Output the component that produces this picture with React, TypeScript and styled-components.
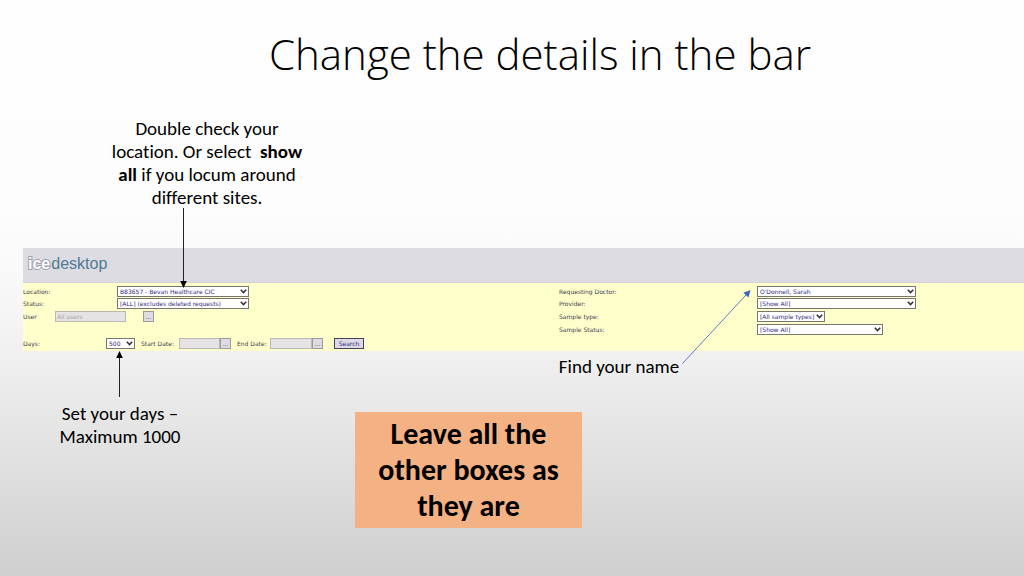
import React from "react";
import styled, { createGlobalStyle } from "styled-components";

const GlobalStyle = createGlobalStyle`
  * { box-sizing: border-box; }
  body { margin: 0; }
`;

const Slide = styled.main`
  min-height: 100vh;
  padding-bottom: 48px;
  background: linear-gradient(180deg, #fefefe 0%, #fdfdfd 36%, #f8f8f8 50%, #f0f0f0 62%, #cfcfcf 100%);
  font-family: Carlito, Lato, "Open Sans", sans-serif;
  font-variant-ligatures: none;
  color: #000;
  overflow: hidden;
`;

const Title = styled.h1`
  margin: 0;
  padding: 28px 0 0 56px;
  font-family: "Open Sans", Lato, sans-serif;
  font-size: 42px;
  line-height: 52px;
  font-weight: 300;
  text-align: center;
`;

const Note = styled.p<{ $width: number }>`
  position: relative;
  width: ${(p) => p.$width}px;
  margin: 0;
  font-size: 19px;
  line-height: 23px;
  text-align: center;
  white-space: nowrap;
`;

const TopNotes = styled.div`
  padding: 37px 0 39px 107px;
`;

const Arrow = styled.svg<{ $left: number; $top: number }>`
  position: absolute;
  left: ${(p) => p.$left}px;
  top: ${(p) => p.$top}px;
  z-index: 1;
  overflow: visible;
  pointer-events: none;
`;

const Panel = styled.section`
  margin-left: 23px;
  font-family: "DejaVu Sans", Verdana, sans-serif;
  font-size: 6px;
  line-height: 11px;
  color: #3c3c50;
`;

const Banner = styled.header`
  height: 35px;
  padding: 5px;
  background: #dddce3;
  border-bottom: 1px solid #d3d2d8;
`;

const Logo = styled.div`
  font-family: "Liberation Sans", Arial, sans-serif;
  font-size: 16px;
  line-height: 22px;
  color: #4f7a90;
`;

const LogoMark = styled.span`
  margin-right: 1px;
  font-weight: 700;
  color: #fff;
  -webkit-text-stroke: 2px #a0a2ae;
  paint-order: stroke fill;
`;

const Form = styled.form`
  display: grid;
  grid-template-columns: 536fr 465fr;
  padding: 3px 0 2px;
  background: #ffffcc;
`;

const Column = styled.div`
  display: flex;
  flex-direction: column;
  gap: 1px;
`;

const Row = styled.div<{ $before?: number }>`
  display: flex;
  align-items: center;
  height: 11px;
  margin-top: ${(p) => p.$before ?? 0}px;
`;

const Label = styled.label<{ $width: number }>`
  flex: none;
  width: ${(p) => p.$width}px;
  white-space: nowrap;
`;

const SelectBox = styled.span<{ $width: number }>`
  position: relative;
  flex: none;
  display: flex;
  width: ${(p) => p.$width}px;
  height: 11px;
`;

const Select = styled.select`
  appearance: none;
  width: 100%;
  height: 11px;
  padding: 0 0 0 2px;
  border: 1px solid #77776f;
  border-radius: 0;
  background: #fff;
  font: inherit;
  line-height: 9px;
  color: #2f2a80;
`;

const Chevron = styled.svg`
  position: absolute;
  right: 2px;
  top: 3px;
  pointer-events: none;
`;

const TextBox = styled.input<{ $width: number }>`
  flex: none;
  width: ${(p) => p.$width}px;
  height: 11px;
  padding: 0 1px;
  border: 1px solid #b9b8b4;
  border-radius: 0;
  background: #e5e3e4;
  font: inherit;
  color: #a5a3ac;
  &::placeholder { color: #a5a3ac; }
`;

const MoreButton = styled.button`
  flex: none;
  width: 11px;
  height: 11px;
  padding: 0;
  border: 1px solid #9a9aa0;
  background: #dddce0;
  font: inherit;
  line-height: 8px;
  color: #444;
`;

const SearchButton = styled.button`
  width: 30px;
  height: 11px;
  margin-left: 11px;
  padding: 0;
  border: 1px solid #45435a;
  background: #dddae6;
  font: inherit;
  line-height: 8px;
  color: #2f2a80;
`;

const Gap = styled.span<{ $width: number }>`
  flex: none;
  width: ${(p) => p.$width}px;
`;

const LowerNotes = styled.div`
  display: grid;
  grid-template-columns: 355px 203px 1fr;
  align-items: start;
  padding-top: 4px;
`;

const DaysNote = styled.div`
  padding: 47px 0 0 50px;
`;

const CalloutCell = styled.div`
  padding-top: 57px;
`;

const Callout = styled.p`
  width: 227px;
  margin: 0;
  padding: 4px 16px;
  background: #f4b183;
  font-size: 30px;
  line-height: 36px;
  font-weight: 700;
  text-align: center;
`;

function Picker({ id, width, value }: { id: string; width: number; value: string }) {
  return (
    <SelectBox $width={width}>
      <Select id={id} defaultValue={value}>
        <option>{value}</option>
      </Select>
      <Chevron width="7" height="5" viewBox="0 0 7 5" aria-hidden="true">
        <path d="M0.8 0.8 L3.5 3.6 L6.2 0.8" fill="none" stroke="#333" strokeWidth="1.6" />
      </Chevron>
    </SelectBox>
  );
}

export default function App() {
  return (
    <>
      <GlobalStyle />
      <Slide>
        <Title>Change the details in the bar</Title>
        <TopNotes>
          <Note $width={200}>
            Double check your
            <br />
            location. Or select &nbsp;<b>show</b>
            <br />
            <b>all</b> if you locum around
            <br />
            different sites.
            <Arrow $left={72} $top={91} width="9" height="80" viewBox="0 0 9 80" aria-hidden="true">
              <path d="M4.5 0 V74" stroke="#222" strokeWidth="1" />
              <path d="M1.2 73 H7.8 L4.5 80 Z" fill="#000" />
            </Arrow>
          </Note>
        </TopNotes>

        <Panel>
          <Banner>
            <Logo>
              <LogoMark>ice</LogoMark>desktop
            </Logo>
          </Banner>
          <Form onSubmit={(e) => e.preventDefault()}>
            <Column>
              <Row>
                <Label $width={94} htmlFor="location">Location:</Label>
                <Picker id="location" width={132} value="B83657 - Bevan Healthcare CIC" />
              </Row>
              <Row>
                <Label $width={94} htmlFor="status">Status:</Label>
                <Picker id="status" width={132} value="[ALL] (excludes deleted requests)" />
              </Row>
              <Row $before={1}>
                <Label $width={32} htmlFor="user">User</Label>
                <TextBox $width={71} id="user" placeholder="All users" disabled />
                <Gap $width={17} />
                <MoreButton type="button" aria-label="Choose user">...</MoreButton>
              </Row>
              <Row $before={15}>
                <Label $width={83} htmlFor="days">Days:</Label>
                <Picker id="days" width={29} value="500" />
                <Gap $width={6} />
                <Label $width={38} htmlFor="start">Start Date:</Label>
                <TextBox $width={41} id="start" />
                <MoreButton type="button" aria-label="Choose start date">...</MoreButton>
                <Gap $width={6} />
                <Label $width={33} htmlFor="end">End Date:</Label>
                <TextBox $width={42} id="end" />
                <MoreButton type="button" aria-label="Choose end date">...</MoreButton>
                <SearchButton type="submit">Search</SearchButton>
              </Row>
            </Column>
            <Column>
              <Row>
                <Label $width={198} htmlFor="doctor">Requesting Doctor:</Label>
                <Picker id="doctor" width={159} value="O'Donnell, Sarah" />
              </Row>
              <Row>
                <Label $width={198} htmlFor="provider">Provider:</Label>
                <Picker id="provider" width={159} value="[Show All]" />
              </Row>
              <Row $before={1}>
                <Label $width={198} htmlFor="type">Sample type:</Label>
                <Picker id="type" width={68} value="[All sample types]" />
              </Row>
              <Row $before={1}>
                <Label $width={198} htmlFor="sample-status">Sample Status:</Label>
                <Picker id="sample-status" width={126} value="[Show All]" />
              </Row>
            </Column>
          </Form>
        </Panel>

        <LowerNotes>
          <DaysNote>
            <Note $width={140}>
              Set your days –
              <br />
              Maximum 1000
              <Arrow $left={65} $top={-51} width="9" height="46" viewBox="0 0 9 46" aria-hidden="true">
                <path d="M4.5 6 V46" stroke="#222" strokeWidth="1" />
                <path d="M1.2 7 H7.8 L4.5 0 Z" fill="#000" />
              </Arrow>
            </Note>
          </DaysNote>
          <CalloutCell>
            <Callout>Leave all the other boxes as they are</Callout>
          </CalloutCell>
          <Note $width={122}>
            Find your name
            <Arrow $left={124} $top={-65} width="69" height="74" viewBox="0 0 69 74" aria-hidden="true">
              <path d="M0.5 73.5 L64 5" stroke="#5b7cc4" strokeWidth="1" />
              <path d="M68.5 0 L66.5 7.5 L61.3 2.8 Z" fill="#3f66bd" />
            </Arrow>
          </Note>
        </LowerNotes>
      </Slide>
    </>
  );
}
